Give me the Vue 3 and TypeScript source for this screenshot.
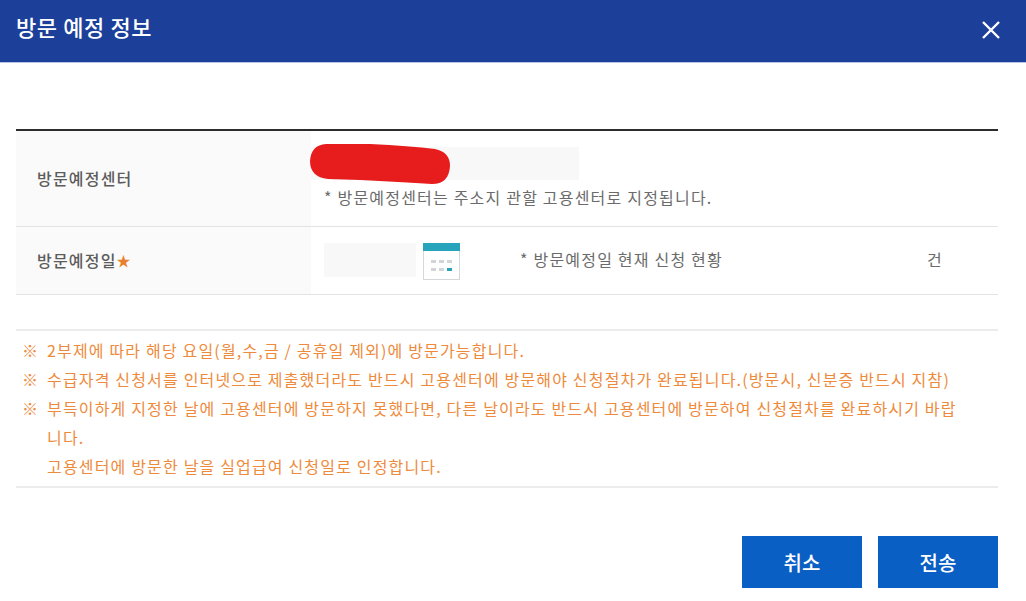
<script setup lang="ts">
const notes = [
  { mark: true, text: '2부제에 따라 해당 요일(월,수,금 / 공휴일 제외)에 방문가능합니다.' },
  { mark: true, text: '수급자격 신청서를 인터넷으로 제출했더라도 반드시 고용센터에 방문해야 신청절차가 완료됩니다.(방문시, 신분증 반드시 지참)' },
  { mark: true, text: '부득이하게 지정한 날에 고용센터에 방문하지 못했다면, 다른 날이라도 반드시 고용센터에 방문하여 신청절차를 완료하시기 바랍니다.' },
  { mark: false, text: '고용센터에 방문한 날을 실업급여 신청일로 인정합니다.' },
]
</script>

<template>
  <div class="dialog">
    <header class="dialog-head">
      <h1 class="dialog-title">방문 예정 정보</h1>
      <button class="close-btn" type="button" aria-label="닫기">
        <svg width="20" height="20" viewBox="0 0 20 20">
          <path d="M2 2 L18 18 M18 2 L2 18" stroke="#fff" stroke-width="2.4" fill="none" />
        </svg>
      </button>
    </header>

    <div class="dialog-body">
      <div class="form-table">
        <div class="row row-center">
          <div class="label">방문예정센터</div>
          <div class="value">
            <div class="center-input">
              <svg class="scribble" width="141" height="40" viewBox="0 0 141 40">
                <path d="M16 0 L60 0 Q100 2 125 5 Q140 8 140 22 Q139 40 122 40 Q90 38 50 36 L18 35 Q0 33 0 17 Q1 1 16 0 Z" fill="#e71d1d" />
              </svg>
            </div>
            <p class="hint">* 방문예정센터는 주소지 관할 고용센터로 지정됩니다.</p>
          </div>
        </div>
        <div class="row row-date">
          <div class="label">방문예정일<span class="star">★</span></div>
          <div class="value value-date">
            <div class="date-input"></div>
            <svg class="cal" width="37" height="37" viewBox="0 0 37 37">
              <rect x="0.5" y="0.5" width="36" height="36" fill="#fff" stroke="#d4d8da" />
              <rect x="0" y="0" width="37" height="8" fill="#27a4bb" />
              <g fill="#d3d6d9">
                <rect x="8" y="17" width="5" height="3" />
                <rect x="16" y="17" width="5" height="3" />
                <rect x="24" y="17" width="5" height="3" />
                <rect x="8" y="25" width="5" height="3" />
                <rect x="16" y="25" width="5" height="3" />
              </g>
              <rect x="24" y="25" width="5" height="3" fill="#27a4bb" />
            </svg>
            <span class="status">* 방문예정일 현재 신청 현황</span>
            <span class="count">건</span>
          </div>
        </div>
      </div>

      <ul class="notes">
        <li v-for="note in notes" :key="note.text" class="note">
          <span class="mark">{{ note.mark ? '※' : '' }}</span>
          <span class="note-text">{{ note.text }}</span>
        </li>
      </ul>

      <div class="actions">
        <button class="btn" type="button">취소</button>
        <button class="btn" type="button">전송</button>
      </div>
    </div>
  </div>
</template>

<style>
html,
body {
  margin: 0;
  background: #fff;
}
</style>

<style scoped>
.dialog {
  width: 1026px;
  height: 601px;
  overflow: hidden;
  font-family: "Noto Sans CJK KR", "Noto Sans", sans-serif;
  background: #fff;
}

.dialog-head {
  height: 63px;
  box-sizing: border-box;
  display: flex;
  align-items: center;
  justify-content: space-between;
  padding: 0 25px 2px 16px;
  background: #1c3f9a;
  border-bottom: 1px solid #b6c3e2;
}

.dialog-title {
  margin: 0 0 8px;
  font-size: 22px;
  font-weight: 500;
  letter-spacing: 0.6px;
  color: #fff;
  line-height: 30px;
}

.close-btn {
  display: flex;
  padding: 0;
  border: none;
  background: none;
}

.dialog-body {
  padding: 66px 28px 0 16px;
}

.form-table {
  border-top: 2px solid #2c2c2c;
}

.row {
  display: grid;
  grid-template-columns: 295px 1fr;
  border-bottom: 1px solid #e3e3e3;
}
.row-center {
  height: 96px;
  box-sizing: border-box;
}
.row-date {
  height: 68px;
  box-sizing: border-box;
}

.label {
  display: flex;
  align-items: center;
  padding-left: 21px;
  padding-bottom: 2px;
  background: #fafafa;
  font-size: 16px;
  font-weight: 500;
  letter-spacing: 1.2px;
  color: #5c5c5c;
}
.star {
  color: #e8812d;
  font-size: 14px;
}

.value {
  padding-left: 13px;
}

.center-input {
  position: relative;
  width: 268px;
  height: 33px;
  margin: 16px 0 0 -13px;
  background: #f8f8f8;
}
.scribble {
  position: absolute;
  left: -1px;
  top: -3px;
}

.hint {
  margin: 6px 0 0;
  font-size: 16px;
  letter-spacing: 1.2px;
  line-height: 22px;
  color: #6b6b6b;
}

.value-date {
  display: flex;
  align-items: flex-start;
  padding-top: 16px;
  color: #6b6b6b;
}
.date-input {
  width: 92px;
  height: 34px;
  background: #f8f8f8;
}
.cal {
  margin-left: 7px;
  flex: none;
}
.status {
  margin-left: 60px;
  font-size: 16px;
  letter-spacing: 1.2px;
  line-height: 22px;
  margin-top: 5px;
}
.count {
  margin-left: 204px;
  font-size: 16px;
  line-height: 22px;
  margin-top: 5px;
}

.notes {
  list-style: none;
  margin: 34px 0 0;
  padding: 5px 0 5px 6px;
  border-top: 2px solid #ececec;
  border-bottom: 2px solid #ececec;
}
.note {
  display: flex;
  font-size: 16px;
  letter-spacing: 1.17px;
  line-height: 29px;
  color: #ee8a3c;
}
.mark {
  flex: none;
  width: 25px;
}
.note-text {
  flex: 1;
  padding-right: 38px;
}

.actions {
  display: flex;
  justify-content: flex-end;
  gap: 16px;
  margin-top: 48px;
}
.btn {
  width: 120px;
  height: 52px;
  border: none;
  background: #0a5fc4;
  color: #fff;
  font-family: inherit;
  font-size: 20px;
  font-weight: 500;
}
</style>
